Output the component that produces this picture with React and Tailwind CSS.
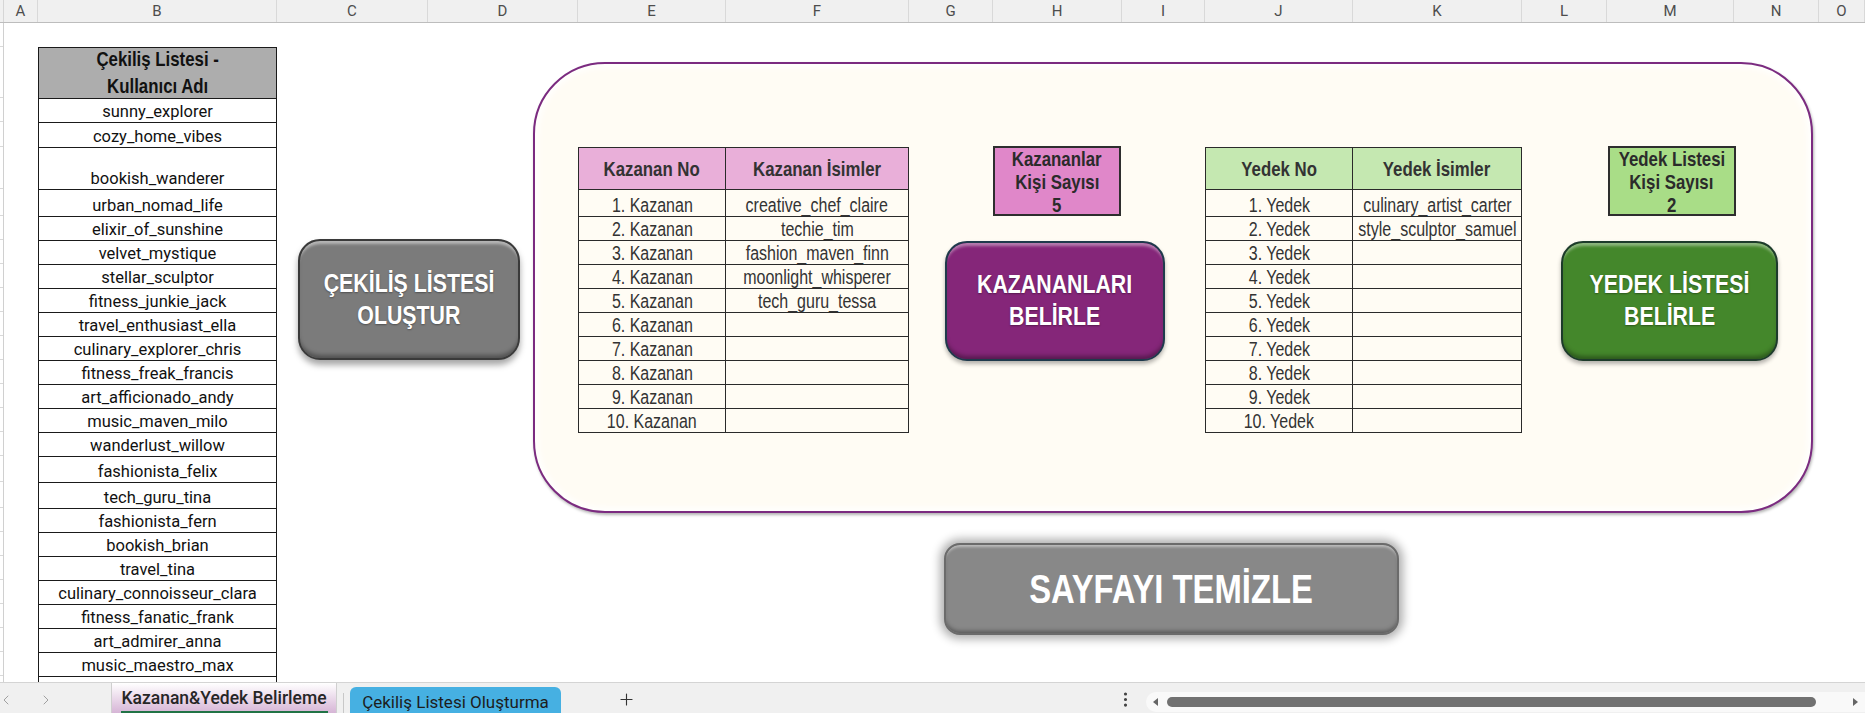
import React from 'react';
import { ChevronLeft, ChevronRight, Plus, EllipsisVertical } from 'lucide-react';

const NARROW = "font-['Liberation_Sans','Arial',sans-serif]";
const SQ = 'inline-block scale-x-[0.82] whitespace-nowrap';

const cols = [
  ['A', 'w-[34px]'], ['B', 'w-[239px]'], ['C', 'w-[151px]'], ['D', 'w-[150px]'],
  ['E', 'w-[148px]'], ['F', 'w-[183px]'], ['G', 'w-[84px]'], ['H', 'w-[129px]'],
  ['I', 'w-[83px]'], ['J', 'w-[148px]'], ['K', 'w-[169px]'], ['L', 'w-[85px]'],
  ['M', 'w-[127px]'], ['N', 'w-[85px]'], ['O', 'flex-1'],
];

const bRows = [
  { n: 'sunny_explorer', h: 'h-[24px]' },
  { n: 'cozy_home_vibes', h: 'h-[25px]' },
  { n: 'bookish_wanderer', h: 'h-[42px]' },
  { n: 'urban_nomad_life', h: 'h-[27px]' },
  { n: 'elixir_of_sunshine', h: 'h-[24px]' },
  { n: 'velvet_mystique', h: 'h-[24px]' },
  { n: 'stellar_sculptor', h: 'h-[24px]' },
  { n: 'fitness_junkie_jack', h: 'h-[24px]' },
  { n: 'travel_enthusiast_ella', h: 'h-[24px]' },
  { n: 'culinary_explorer_chris', h: 'h-[24px]' },
  { n: 'fitness_freak_francis', h: 'h-[24px]' },
  { n: 'art_afficionado_andy', h: 'h-[24px]' },
  { n: 'music_maven_milo', h: 'h-[24px]' },
  { n: 'wanderlust_willow', h: 'h-[24px]' },
  { n: 'fashionista_felix', h: 'h-[26px]' },
  { n: 'tech_guru_tina', h: 'h-[26px]' },
  { n: 'fashionista_fern', h: 'h-[24px]' },
  { n: 'bookish_brian', h: 'h-[24px]' },
  { n: 'travel_tina', h: 'h-[24px]' },
  { n: 'culinary_connoisseur_clara', h: 'h-[24px]' },
  { n: 'fitness_fanatic_frank', h: 'h-[24px]' },
  { n: 'art_admirer_anna', h: 'h-[24px]' },
  { n: 'music_maestro_max', h: 'h-[24px]' },
];

const stripRows = [{ h: 'h-[24px]' }, { h: 'h-[51px]' }, ...bRows, { h: 'h-[24px]' }];

const kz = ['creative_chef_claire', 'techie_tim', 'fashion_maven_finn', 'moonlight_whisperer', 'tech_guru_tessa', '', '', '', '', ''];
const yd = ['culinary_artist_carter', 'style_sculptor_samuel', '', '', '', '', '', '', '', ''];

function DataTable({ width, headBg, h1, h2, label, names }) {
  return (
    <div className={`${width} border border-[#2a2a2a] flex flex-col shrink-0 ${NARROW}`}>
      <div className={`h-[41px] flex ${headBg}`}>
        <div className="w-[147px] border-r border-[#2a2a2a] flex items-center justify-center font-bold text-[20.5px] leading-[24px] text-[#333]">
          <span className={SQ}>{h1}</span>
        </div>
        <div className="flex-1 flex items-center justify-center font-bold text-[20.5px] leading-[24px] text-[#333]">
          <span className={SQ}>{h2}</span>
        </div>
      </div>
      {names.map((n, i) => (
        <div key={i} className={`flex border-t border-[#2a2a2a] ${i === 0 ? 'h-[27px]' : 'h-[24px]'}`}>
          <div className="w-[147px] border-r border-[#2a2a2a] flex items-end justify-center pb-[1px] leading-[20px] text-[19.5px] text-[#333]">
            <span className={SQ}>{i + 1}. {label}</span>
          </div>
          <div className="flex-1 min-w-0 flex items-end justify-center pb-[1px] leading-[20px] text-[19.5px] text-[#333]">
            <span className={SQ}>{n}</span>
          </div>
        </div>
      ))}
    </div>
  );
}

function CountBox({ bg, l1, val }) {
  return (
    <div className={`ml-[4px] mt-[-1px] w-[128px] h-[70px] border-2 border-[#2e2e2e] ${bg} flex flex-col items-center justify-center overflow-hidden font-bold text-[20.5px] leading-[23px] text-[#2b2b2b] ${NARROW}`}>
      <span className={SQ}>{l1}</span>
      <span className={SQ}>Kişi Sayısı</span>
      <span className={SQ}>{val}</span>
    </div>
  );
}

function BigText({ children }) {
  return (
    <span className={`${SQ} text-white font-bold text-[26px] leading-[31.7px] [text-shadow:0_1px_2px_rgba(0,0,0,0.35)] ${NARROW}`}>{children}</span>
  );
}

export default function App() {
  return (
    <div className="w-[1865px] h-[713px] overflow-hidden bg-white flex flex-col font-['Roboto',sans-serif]">
      {/* column header */}
      <div className="h-[23px] flex bg-[#f0f0f0] border-b border-[#bdbdbd] shrink-0">
        <div className="w-[4px] border-r border-[#d6d6d6]" />
        {cols.map(([c, w]) => (
          <div key={c} className={`${w} border-r border-[#d9d9d9] flex items-center justify-center text-[15px] leading-none text-[#4d4d4d]`}>
            {c}
          </div>
        ))}
      </div>

      {/* sheet body */}
      <div className="h-[659px] flex overflow-hidden shrink-0">
        {/* row header strip */}
        <div className="w-[4px] border-r border-[#d0d0d0] flex flex-col shrink-0">
          {stripRows.map((r, i) => (
            <div key={i} className={`${r.h} border-b border-[#d9d9d9] shrink-0`} />
          ))}
        </div>
        <div className="w-[34px] shrink-0" />

        {/* column B list */}
        <div className="w-[239px] shrink-0">
          <div className="mt-[24px] border border-[#1a1a1a] flex flex-col">
            <div className={`h-[50px] bg-[#adadad] flex flex-col items-center justify-center font-bold text-[20.5px] leading-[26.7px] text-[#111] ${NARROW}`}>
              <span className={SQ}>Çekiliş Listesi -</span>
              <span className={SQ}>Kullanıcı Adı</span>
            </div>
            {bRows.map((r) => (
              <div key={r.n} className={`${r.h} shrink-0 border-t border-[#1a1a1a] flex items-end justify-center pb-[1px] text-[16.5px] leading-[18px] text-[#111] whitespace-nowrap`}>
                {r.n}
              </div>
            ))}
            <div className="h-[24px] shrink-0 border-t border-[#1a1a1a]" />
          </div>
        </div>

        {/* columns C-D with button */}
        <div className="w-[256px] shrink-0">
          <div className="ml-[21px] mt-[216px] w-[222px] h-[121px] rounded-[22px] border-2 border-[#3a3a3a] bg-[#7b7b7b] shadow-[inset_0_5px_3px_-2px_rgba(255,255,255,0.45),inset_0_-5px_4px_-2px_rgba(0,0,0,0.35),0_5px_6px_rgba(0,0,0,0.35)] flex flex-col items-center justify-center">
            <BigText>ÇEKİLİŞ LİSTESİ</BigText>
            <BigText>OLUŞTUR</BigText>
          </div>
        </div>

        {/* right area */}
        <div className="flex flex-col shrink-0">
          <div className="mt-[39px] w-[1280px] h-[451px] rounded-[72px] border-2 border-[#7b2b80] bg-[#fffcf4] shadow-[inset_0_0_7px_3px_#ffffff,1px_2px_3px_rgba(0,0,0,0.3)] pt-[83px] pl-[43px] flex items-start">
            <DataTable width="w-[331px]" headBg="bg-[#e9afd9]" h1="Kazanan No" h2="Kazanan İsimler" label="Kazanan" names={kz} />

            <div className="ml-[36px] w-[220px] flex flex-col items-center shrink-0">
              <CountBox bg="bg-[#e087c9]" l1="Kazananlar" val="5" />
              <div className="mt-[25px] w-[220px] h-[120px] rounded-[22px] border-2 border-[#1f3a4c] bg-[#852679] shadow-[inset_0_5px_3px_-2px_rgba(255,255,255,0.4),inset_0_-5px_4px_-2px_rgba(0,0,0,0.35),0_3px_4px_rgba(0,0,0,0.3)] flex flex-col items-center justify-center">
                <BigText>KAZANANLARI</BigText>
                <BigText>BELİRLE</BigText>
              </div>
            </div>

            <div className="ml-[40px]">
              <DataTable width="w-[317px]" headBg="bg-[#c5e8b1]" h1="Yedek No" h2="Yedek İsimler" label="Yedek" names={yd} />
            </div>

            <div className="ml-[39px] w-[217px] flex flex-col items-center shrink-0">
              <CountBox bg="bg-[#a9dd87]" l1="Yedek Listesi" val="2" />
              <div className="mt-[25px] w-[217px] h-[120px] rounded-[22px] border-2 border-[#1d3b2b] bg-[#44872b] shadow-[inset_0_5px_3px_-2px_rgba(255,255,255,0.4),inset_0_-5px_4px_-2px_rgba(0,0,0,0.35),0_3px_4px_rgba(0,0,0,0.3)] flex flex-col items-center justify-center">
                <BigText>YEDEK LİSTESİ</BigText>
                <BigText>BELİRLE</BigText>
              </div>
            </div>
          </div>

          <div className="mt-[30px] ml-[411px] w-[455px] h-[92px] rounded-[16px] border-2 border-[#6b6b6b] bg-[#888888] shadow-[inset_0_4px_3px_-2px_rgba(255,255,255,0.45),inset_0_-4px_4px_-2px_rgba(0,0,0,0.35),0_0_10px_4px_rgba(0,0,0,0.32)] flex items-center justify-center">
            <span className={`${SQ} text-white font-bold text-[40px] leading-none ${NARROW}`}>SAYFAYI TEMİZLE</span>
          </div>
        </div>
      </div>

      {/* sheet tabs bar */}
      <div className="h-[31px] border-t border-[#d4d4d4] bg-[#f0f0f0] flex items-stretch shrink-0">
        <div className="w-[111px] flex items-center pt-[4px] shrink-0">
          <ChevronLeft size={16} strokeWidth={1.5} color="#a0a0a0" className="ml-[-2px]" />
          <ChevronRight size={16} strokeWidth={1.5} color="#a0a0a0" className="ml-[24px]" />
        </div>
        <div className="w-[226px] border-x border-[#cfcfcf] bg-gradient-to-b from-white to-[#d6b5d6] flex flex-col items-center justify-end shrink-0">
          <span className="pb-[3px] text-[17.5px] leading-[20px] font-medium text-[#262626] whitespace-nowrap">Kazanan&amp;Yedek Belirleme</span>
          <div className="h-[2px] w-[207px] bg-[#217346]" />
        </div>
        <div className="w-[13px] flex justify-center items-end shrink-0">
          <div className="w-px h-[20px] bg-[#c8c8c8]" />
        </div>
        <div className="mt-[4px] w-[211px] rounded-t-[6px] bg-[#46b0e2] flex items-center justify-center pt-[3px] shrink-0">
          <span className="text-[17px] leading-[20px] text-[#1d1d1d] whitespace-nowrap">Çekiliş Listesi Oluşturma</span>
        </div>
        <div className="w-[50px] shrink-0" />
        <div className="w-[30px] flex items-center justify-center pt-[2px] shrink-0">
          <Plus size={19} strokeWidth={1.4} color="#333" />
        </div>
        <div className="w-[474px] shrink-0" />
        <div className="w-[20px] flex items-center justify-center pt-[2px] shrink-0">
          <EllipsisVertical size={19} strokeWidth={2} color="#444" />
        </div>
        <div className="w-[11px] shrink-0" />
        <div className="flex-1 mt-[9px] h-[20px] rounded-l-[10px] bg-[#f9f9f9] flex items-center">
          <div className="ml-[7px] w-0 h-0 border-y-[4px] border-y-transparent border-r-[5px] border-r-[#666]" />
          <div className="ml-[9px] w-[649px] h-[10px] rounded-full bg-[#717171]" />
          <div className="ml-[37px] w-0 h-0 border-y-[4px] border-y-transparent border-l-[5px] border-l-[#666]" />
        </div>
      </div>
    </div>
  );
}
